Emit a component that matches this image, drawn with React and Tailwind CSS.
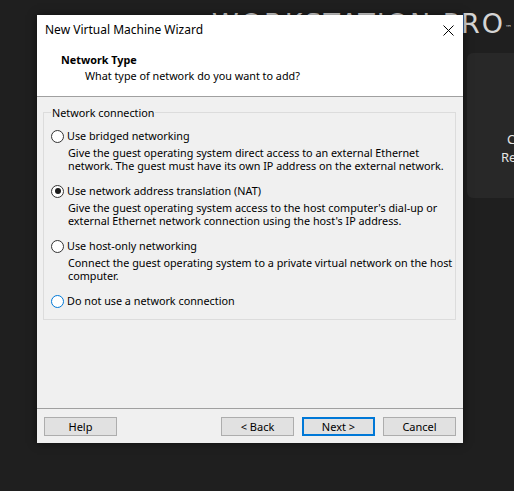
import React from "react";

const options = [
  {
    label: "Use bridged networking",
    desc: [
      "Give the guest operating system direct access to an external Ethernet",
      "network. The guest must have its own IP address on the external network.",
    ],
  },
  {
    label: "Use network address translation (NAT)",
    checked: true,
    desc: [
      "Give the guest operating system access to the host computer's dial-up or",
      "external Ethernet network connection using the host's IP address.",
    ],
  },
  {
    label: "Use host-only networking",
    desc: [
      "Connect the guest operating system to a private virtual network on the host",
      "computer.",
    ],
  },
  { label: "Do not use a network connection", focused: true, desc: [] },
];

function Radio({ checked, focused }) {
  return (
    <span
      className={`flex h-[13px] w-[13px] shrink-0 items-center justify-center rounded-full border bg-white ${
        focused ? "border-[#0078d7]" : "border-[#333333]"
      }`}
    >
      {checked && <span className="h-[6px] w-[6px] rounded-full bg-[#1a1a1a]" />}
    </span>
  );
}

function Button({ children, primary }) {
  return (
    <button
      className={`h-[19px] w-[73px] bg-[#e1e1e1] text-[11px] leading-none text-black ${
        primary ? "border-2 border-[#0078d7]" : "border border-[#adadad]"
      }`}
    >
      {children}
    </button>
  );
}

export default function App() {
  return (
    <div
      className="relative h-[491px] w-[514px] overflow-hidden bg-[#1f1f1f]"
      style={{ fontFamily: "'Noto Sans', 'Open Sans', sans-serif" }}
    >
      {/* Workstation backdrop */}
      <div
        className="absolute left-[212px] top-[8px] whitespace-nowrap text-[27px] leading-[32px] tracking-[2px] text-[#d4d4d4]"
        style={{ fontFamily: "'DejaVu Sans', sans-serif" }}
      >
        WORKSTATION PRO<sup className="text-[7px] tracking-normal">™</sup> 17
      </div>

      <div className="absolute left-[467px] top-[53px] flex h-[145px] w-[120px] flex-col justify-end rounded-[6px] bg-[#282828] pb-[32px] text-[13px] leading-[18px] text-[#e6e6e6]">
        <div className="pl-[40px]">Create</div>
        <div className="pl-[34px]">Remote</div>
      </div>

      {/* Dialog */}
      <div className="absolute left-[37px] top-[15px] flex h-[428px] w-[426px] flex-col whitespace-nowrap bg-[#f0f0f0] text-[10.8px] text-black shadow-[0_0_8px_rgba(0,0,0,0.5)]">
        <div className="flex h-[30px] items-center justify-between bg-white pl-[8px] pr-[9px] text-[12px]">
          <span>New Virtual Machine Wizard</span>
          <svg width="11" height="11" viewBox="0 0 11 11" className="text-black">
            <path d="M0.5 0.5 L10.5 10.5 M10.5 0.5 L0.5 10.5" stroke="currentColor" strokeWidth="1" />
          </svg>
        </div>

        <div className="h-[52px] border-b border-[#a0a0a0] bg-white pl-[24px] pt-[7px] leading-[15px]">
          <div className="font-bold">Network Type</div>
          <div className="mt-[1px] pl-[24px]">What type of network do you want to add?</div>
        </div>

        <div className="flex-1 pl-[6px] pr-[7px] pt-[8px]">
          <fieldset className="min-w-0 border border-[#dcdcdc] px-[7px] pb-[10px]">
            <legend className="px-[1px] leading-[15px]">Network connection</legend>
            <div className="mt-[8px] flex flex-col gap-[11px]">
              {options.map((o) => (
                <div key={o.label}>
                  <div className="flex h-[16px] items-center gap-[3px]">
                    <Radio checked={o.checked} focused={o.focused} />
                    <span>{o.label}</span>
                  </div>
                  {o.desc.length > 0 && (
                    <div className="mt-[2px] pl-[17px] leading-[13px]">
                      {o.desc.map((d) => (
                        <div key={d}>{d}</div>
                      ))}
                    </div>
                  )}
                </div>
              ))}
            </div>
          </fieldset>
        </div>

        <div className="flex h-[35px] items-start justify-between border-t border-[#a0a0a0] px-[7px] pt-[8px]">
          <Button>Help</Button>
          <div className="flex gap-[8px]">
            <Button>&lt; Back</Button>
            <Button primary>Next &gt;</Button>
            <Button>Cancel</Button>
          </div>
        </div>
      </div>
    </div>
  );
}
